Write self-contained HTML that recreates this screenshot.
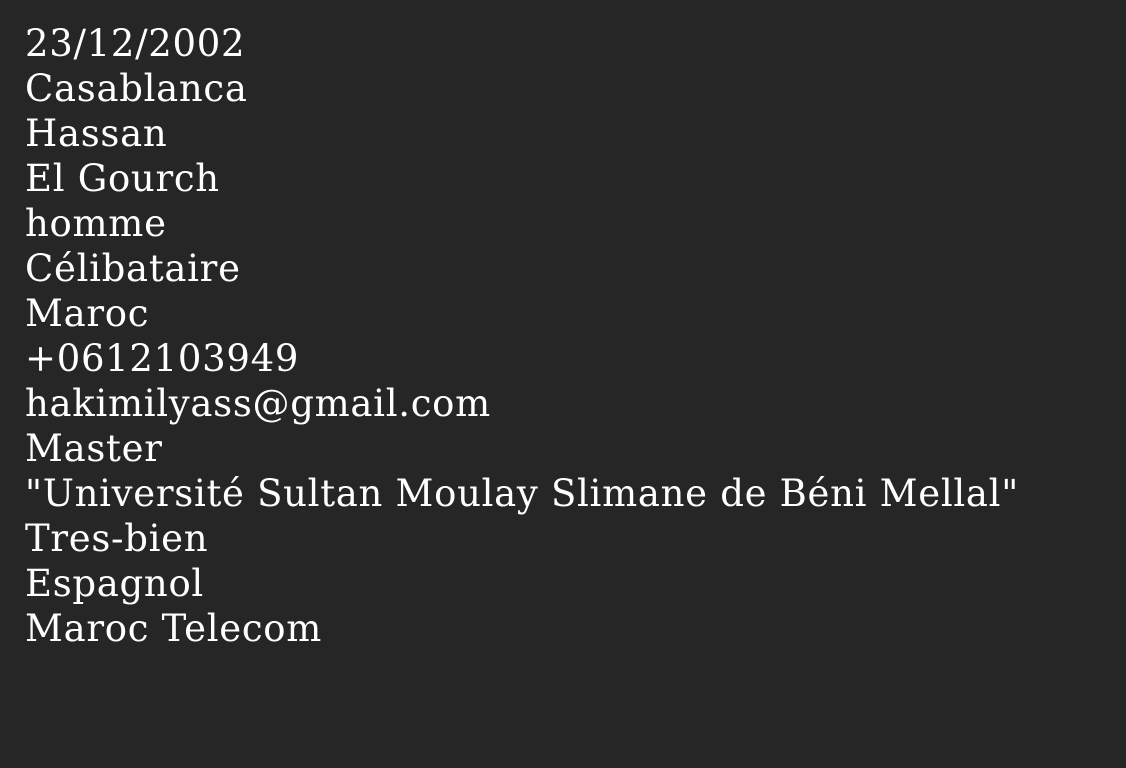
<!DOCTYPE html>
<html><head><meta charset="utf-8">
<style>
html,body{margin:0;padding:0;background:#262626;width:1126px;height:768px;overflow:hidden}
div{position:absolute;left:25px;top:21px;color:#fff;font-family:"DejaVu Serif","Liberation Serif",serif;font-size:37px;line-height:45px;letter-spacing:0.7px;white-space:pre}
</style></head><body>
<div>23/12/2002
Casablanca
Hassan
El Gourch
homme
Célibataire
Maroc
+0612103949
hakimilyass@gmail.com
Master
"Université Sultan Moulay Slimane de Béni Mellal"
Tres-bien
Espagnol
Maroc Telecom</div>
</body></html>
